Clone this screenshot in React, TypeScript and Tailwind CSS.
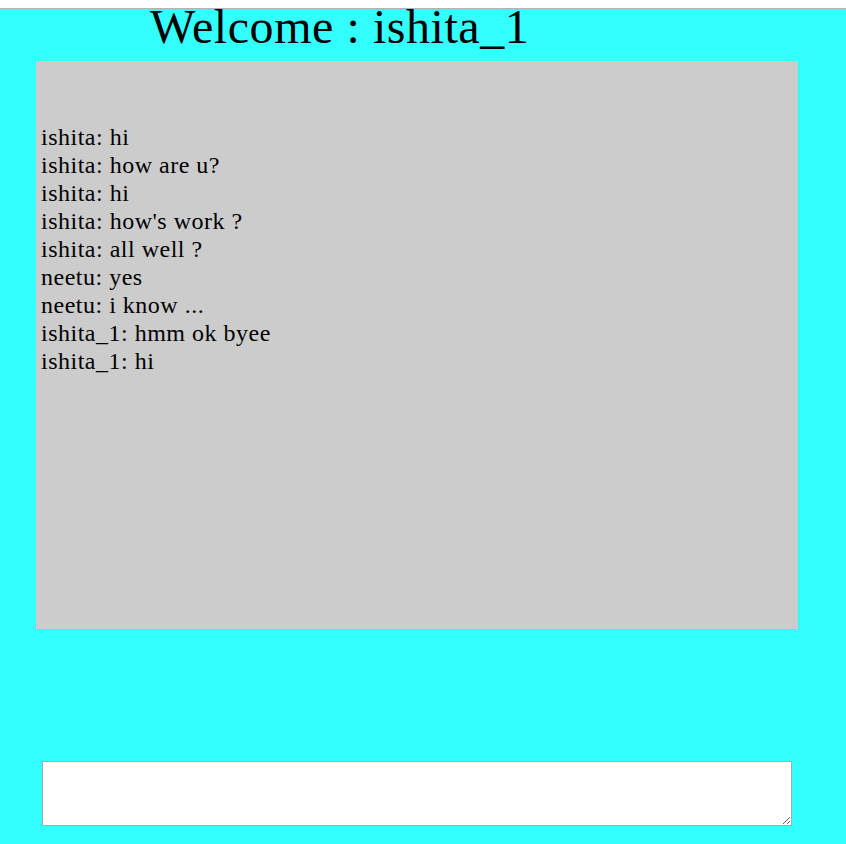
import { useState } from 'react';

/** Chat log shown in the grey panel */
const MESSAGES: [string, string][] = [
  ['ishita', 'hi'],
  ['ishita', 'how are u?'],
  ['ishita', 'hi'],
  ['ishita', "how's work ?"],
  ['ishita', 'all well ?'],
  ['neetu', 'yes'],
  ['neetu', 'i know ...'],
  ['ishita_1', 'hmm ok byee'],
  ['ishita_1', 'hi'],
];

export default function App() {
  const [draft, setDraft] = useState('');

  return (
    <div className="min-h-screen bg-white pt-2 font-['Liberation_Serif',serif] text-black">
      <div className="flex min-h-[836px] flex-col border-t border-[#b3b3b3] bg-[#33ffff]">
        <h1 className="ml-[150px] mb-4 text-[48px] font-normal leading-[36px] tracking-[0.55px]">
          Welcome : ishita_1
        </h1>

        {/* Message list */}
        <div className="ml-9 h-[568px] w-[762px] bg-[#cccccc] pl-[5px] pt-[62px] text-[24px] leading-[28px] tracking-[0.5px]">
          {MESSAGES.map(([user, text], i) => (
            <div key={i}>
              {user}: {text}
            </div>
          ))}
        </div>

        {/* Compose box */}
        <textarea
          value={draft}
          onChange={(e) => setDraft(e.target.value)}
          className="ml-[42px] mt-[132px] h-[65px] w-[750px] resize border border-[#a9a9a9] bg-white outline-none"
        />
      </div>
    </div>
  );
}
